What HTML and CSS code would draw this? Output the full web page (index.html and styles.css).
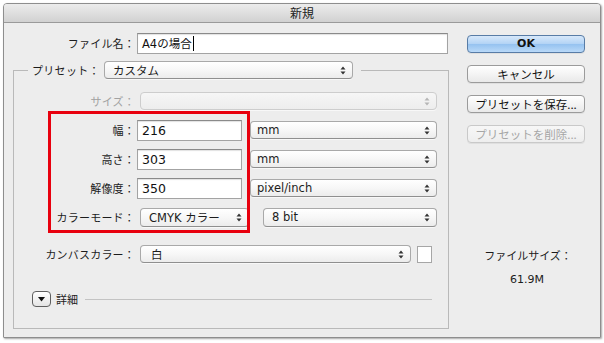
FILE: index.html
```html
<!DOCTYPE html>
<html lang="ja">
<head>
<meta charset="utf-8">
<title>新規</title>
<link rel="stylesheet" href="styles.css">
</head>
<body>
<div class="window">
  <div class="titlebar">新規</div>
  <div class="content">
    <div class="main">
      <div class="row fname">
        <span class="lbl top">ファイル名：</span>
        <div class="input wide"><span class="val">A4の場合</span><span class="caret"></span></div>
      </div>
      <fieldset class="group">
        <legend class="legend">
          <span class="lbl-l">プリセット：</span>
          <div class="sel preset"><span class="val">カスタム</span><svg class="arr" width="6" height="9" viewBox="0 0 6 9"><path d="M3 0.5L5.5 3.5H0.5Z M3 8.5L5.5 5.5H0.5Z" fill="#333"/></svg></div>
        </legend>
        <div class="row r-size">
          <span class="lbl dis">サイズ：</span>
          <div class="sel size disabled"><span class="val"></span><svg class="arr" width="6" height="9" viewBox="0 0 6 9"><path d="M3 0.5L5.5 3.5H0.5Z M3 8.5L5.5 5.5H0.5Z" fill="#b5b5b5"/></svg></div>
        </div>
        <div class="row r-std">
          <span class="lbl">幅：</span>
          <div class="input num"><span class="val">216</span></div>
          <div class="sel unit"><span class="val">mm</span><svg class="arr" width="6" height="9" viewBox="0 0 6 9"><path d="M3 0.5L5.5 3.5H0.5Z M3 8.5L5.5 5.5H0.5Z" fill="#333"/></svg></div>
        </div>
        <div class="row r-std">
          <span class="lbl">高さ：</span>
          <div class="input num"><span class="val">303</span></div>
          <div class="sel unit"><span class="val">mm</span><svg class="arr" width="6" height="9" viewBox="0 0 6 9"><path d="M3 0.5L5.5 3.5H0.5Z M3 8.5L5.5 5.5H0.5Z" fill="#333"/></svg></div>
        </div>
        <div class="row r-std">
          <span class="lbl">解像度：</span>
          <div class="input num"><span class="val">350</span></div>
          <div class="sel unit"><span class="val">pixel/inch</span><svg class="arr" width="6" height="9" viewBox="0 0 6 9"><path d="M3 0.5L5.5 3.5H0.5Z M3 8.5L5.5 5.5H0.5Z" fill="#333"/></svg></div>
        </div>
        <div class="row r-std">
          <span class="lbl">カラーモード：</span>
          <div class="sel mode"><span class="val">CMYK カラー</span><svg class="arr" width="6" height="9" viewBox="0 0 6 9"><path d="M3 0.5L5.5 3.5H0.5Z M3 8.5L5.5 5.5H0.5Z" fill="#333"/></svg></div>
          <div class="sel bits"><span class="val">8 bit</span><svg class="arr" width="6" height="9" viewBox="0 0 6 9"><path d="M3 0.5L5.5 3.5H0.5Z M3 8.5L5.5 5.5H0.5Z" fill="#333"/></svg></div>
        </div>
        <div class="row r-canvas">
          <span class="lbl">カンバスカラー：</span>
          <div class="sel canvas"><span class="val">白</span><svg class="arr" width="6" height="9" viewBox="0 0 6 9"><path d="M3 0.5L5.5 3.5H0.5Z M3 8.5L5.5 5.5H0.5Z" fill="#333"/></svg></div>
          <div class="swatch"></div>
        </div>
        <div class="row r-detail">
          <div class="disclose"><svg width="9" height="6" viewBox="0 0 9 6"><path d="M1 1H8L4.5 5.5Z" fill="#111"/></svg></div>
          <span class="dlabel">詳細</span>
          <div class="sep"></div>
        </div>
      </fieldset>
    </div>
    <div class="side">
      <div class="btn default">OK</div>
      <div class="btn">キャンセル</div>
      <div class="btn">プリセットを保存...</div>
      <div class="btn off">プリセットを削除...</div>
      <div class="fsize-l">ファイルサイズ：</div>
      <div class="fsize-v">61.9M</div>
    </div>
  </div>
  <div class="mark"></div>
</div>
</body>
</html>
```
FILE: styles.css
```css
* { box-sizing: border-box; }
html, body { margin: 0; padding: 0; }
body {
  background: #ffffff;
  width: 604px;
  height: 343px;
  overflow: hidden;
  font-family: "Noto Sans CJK JP", "DejaVu Sans", sans-serif;
  font-size: 11px;
  color: #1c1c1c;
}
.window {
  position: relative;
  margin: 3px 0 0 3px;
  width: 598px;
  height: 335px;
  background: #ededed;
  border: 1px solid #8e8e8e;
  border-radius: 4px 4px 1px 1px;
  box-shadow: 1px 1px 2px rgba(0,0,0,0.35);
}
.titlebar {
  height: 19px;
  border-bottom: 1px solid #9a9a9a;
  background: linear-gradient(#ececec, #d1d1d1);
  border-radius: 3px 3px 0 0;
  text-align: center;
  font-size: 12px;
  line-height: 18px;
  color: #222;
}
.content {
  display: flex;
  padding-left: 9px;
}
.main { width: 436px; }
.row {
  display: flex;
  align-items: center;
  height: 22px;
}
.fname { margin-top: 9px; }
.lbl {
  width: 121px;
  text-align: right;
  white-space: nowrap;
  letter-spacing: 0.2px;
}
.lbl.top { width: 122px; }
.lbl.dis { color: #a2a2a2; }
.val {
  font-family: "DejaVu Sans", "Noto Sans CJK JP", sans-serif;
  font-size: 11.5px;
  white-space: nowrap;
}
.input {
  display: flex;
  align-items: center;
  height: 21px;
  margin-left: 2px;
  padding-left: 4px;
  background: #fff;
  border: 1px solid #a3a3a3;
  border-top-color: #8a8a8a;
  box-shadow: inset 0 1px 1px rgba(0,0,0,0.12);
}
.input .val { font-size: 12.5px; color: #111; }
.fname .input .val { font-size: 11.5px; }
.input.wide { width: 311px; }
.input.num { width: 105px; }
.caret {
  width: 1px;
  height: 15px;
  background: #000;
  margin-left: 1px;
}
.group {
  margin: 7px 0 0 0;
  padding: 11px 0 18px 0;
  width: 436px;
  min-inline-size: 0;
  border: 1px solid #b9b9b9;
  border-radius: 0;
}
.legend {
  display: flex;
  align-items: center;
  margin-left: 14px;
  padding: 0 8px 0 4px;
}
.lbl-l { width: 70px; white-space: nowrap; letter-spacing: 0.3px; }
.sel {
  display: flex;
  align-items: center;
  justify-content: space-between;
  height: 18px;
  padding: 0 6px 0 8px;
  background: linear-gradient(#ffffff, #f7f7f7 50%, #ececec);
  border: 1px solid #a9a9a9;
  border-bottom-color: #8f8f8f;
  border-radius: 4px;
  box-shadow: 0 1px 0 rgba(255,255,255,0.6);
}
.sel .arr { flex: none; }
.sel.preset { width: 249px; margin-left: 2px; }
.sel.size { width: 297px; margin-left: 5px; }
.sel.disabled { border-color: #cdcdcd; background: linear-gradient(#f6f6f6, #ededed); }
.sel.unit { width: 187px; margin-left: 8px; padding-left: 6px; }
.sel.mode { width: 109px; margin-left: 5px; height: 19px; }
.sel.bits { width: 174px; margin-left: 14px; height: 19px; }
.sel.canvas { width: 271px; margin-left: 5px; padding-left: 10px; }
.r-size { margin-top: 0; }
.r-std { margin-top: 7px; }
.r-canvas { margin-top: 15px; }
.r-detail { margin-top: 23px; }
.swatch {
  width: 15px;
  height: 17px;
  margin-left: 6px;
  background: #fff;
  border: 1px solid #a6a6a6;
}
.disclose {
  display: flex;
  align-items: center;
  justify-content: center;
  width: 19px;
  height: 16px;
  margin-left: 18px;
  border: 1px solid #5f5f5f;
  border-radius: 4px;
  background: linear-gradient(#ffffff, #e4e4e4);
}
.dlabel { margin-left: 5px; }
.sep {
  flex: 1;
  height: 1px;
  margin: 1px 16px 0 7px;
  background: #c3c3c3;
}
.side {
  width: 118px;
  margin-left: 18px;
  display: flex;
  flex-direction: column;
}
.btn {
  height: 18px;
  margin-top: 12px;
  border: 1px solid #9b9b9b;
  border-radius: 4px;
  background: linear-gradient(#ffffff, #f4f4f4 50%, #e9e9e9);
  box-shadow: 0 1px 0 rgba(0,0,0,0.06);
  text-align: center;
  line-height: 16px;
  font-size: 11.5px;
  color: #111;
  white-space: nowrap;
}
.btn.default {
  border-color: #587ca6;
  background: linear-gradient(#d7e8fa, #b2d3f5 50%, #95c2f0 51%, #b9d9f8);
  font-family: "DejaVu Sans", sans-serif;
  font-weight: bold;
  font-size: 11px;
}
.btn.off {
  border-color: #c9c9c9;
  color: #a6a6a6;
  background: linear-gradient(#f7f7f7, #eeeeee);
}
.fsize-l {
  margin-top: 105px;
  text-align: center;
  line-height: 14px;
  padding-left: 4px;
}
.fsize-v {
  margin-top: 11px;
  text-align: center;
  line-height: 14px;
  font-family: "DejaVu Sans", sans-serif;
  font-size: 11px;
  padding-left: 2px;
}
.mark {
  position: absolute;
  left: 44px;
  top: 107px;
  width: 202px;
  height: 122px;
  border: 3px solid #e8000e;
}
```
